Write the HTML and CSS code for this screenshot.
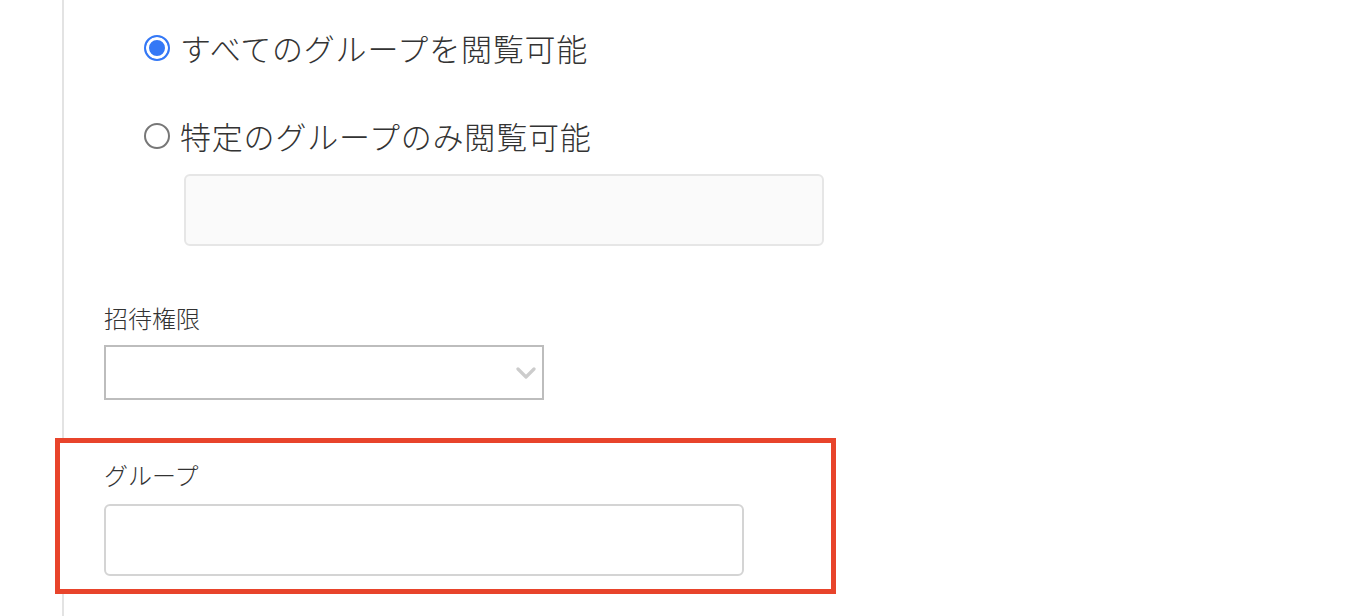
FILE: index.html
```html
<!DOCTYPE html>
<html lang="ja">
<head>
  <meta charset="UTF-8" />
  <meta name="viewport" content="width=device-width, initial-scale=1.0"/>
  <title>グループ設定</title>
  <link rel="stylesheet" href="styles.css">
</head>
<body>
  <div class="page">
    <div class="radio-group">
      <label class="radio-row">
        <input type="radio" name="scope" checked>
        <span>すべてのグループを閲覧可能</span>
      </label>
      <label class="radio-row second">
        <input type="radio" name="scope">
        <span>特定のグループのみ閲覧可能</span>
      </label>
      <input class="text-input scope-input" type="text" disabled>
    </div>

    <div class="field invite">
      <div class="field-label">招待権限</div>
      <div class="select-wrap">
        <select class="select"></select>
        <svg class="chevron" width="20" height="12" viewBox="0 0 20 12">
          <path d="M2 2 L10 10 L18 2" fill="none" stroke="#cccccc" stroke-width="3.2" stroke-linecap="round" stroke-linejoin="round"/>
        </svg>
      </div>
    </div>

    <div class="field highlight">
      <div class="field-label">グループ</div>
      <input class="text-input group-input" type="text">
    </div>
  </div>
</body>
</html>
```

FILE: styles.css
```css
body {
  margin: 0;
  font-family: "Noto Sans CJK JP", "Noto Sans", sans-serif;
  color: #333;
  background: #fff;
}

.page {
  margin-left: 62px;
  border-left: 2px solid #e3e3e3;
  min-height: 100vh;
  padding: 28px 0 0 40px;
  box-sizing: border-box;
}

.radio-row {
  display: flex;
  align-items: center;
  gap: 10px;
  margin-left: 40px;
  font-size: 31px;
  font-weight: 300;
  letter-spacing: 0.8px;
  line-height: 40px;
  height: 40px;
}

.radio-row.second {
  margin-top: 48px;
}

.radio-row input {
  appearance: none;
  -webkit-appearance: none;
  margin: 0;
  width: 26px;
  height: 26px;
  border: 2px solid #777;
  border-radius: 50%;
  background: #fff;
  flex-shrink: 0;
}

.radio-row input:checked {
  border-color: #3478f6;
  background: #3478f6;
  box-shadow: inset 0 0 0 3px #fff;
}

.text-input {
  display: block;
  box-sizing: border-box;
  width: 640px;
  height: 72px;
  margin: 0;
  border: 2px solid #d4d4d4;
  border-radius: 6px;
  background: #fff;
  font: inherit;
}

.scope-input {
  margin: 18px 0 0 80px;
  background: #fafafa;
  border-color: #e6e6e6;
}

.field-label {
  font-size: 24px;
  font-weight: 300;
  line-height: 32px;
}

.invite {
  margin-top: 56px;
}

.invite .field-label {
  margin-bottom: 11px;
}

.select-wrap {
  position: relative;
  width: 440px;
}

.select {
  appearance: none;
  -webkit-appearance: none;
  display: block;
  box-sizing: border-box;
  width: 440px;
  height: 55px;
  margin: 0;
  border: 2px solid #bdbdbd;
  border-radius: 0;
  background: #fff;
}

.chevron {
  position: absolute;
  right: 8px;
  top: 22px;
}

.highlight {
  margin: 38px 0 0 -49px;
  width: 781px;
  box-sizing: border-box;
  border: 5px solid #e8442b;
  background: #fff;
  padding: 16px 0 13px 44px;
}

.highlight .field-label {
  margin-bottom: 13px;
}
```
